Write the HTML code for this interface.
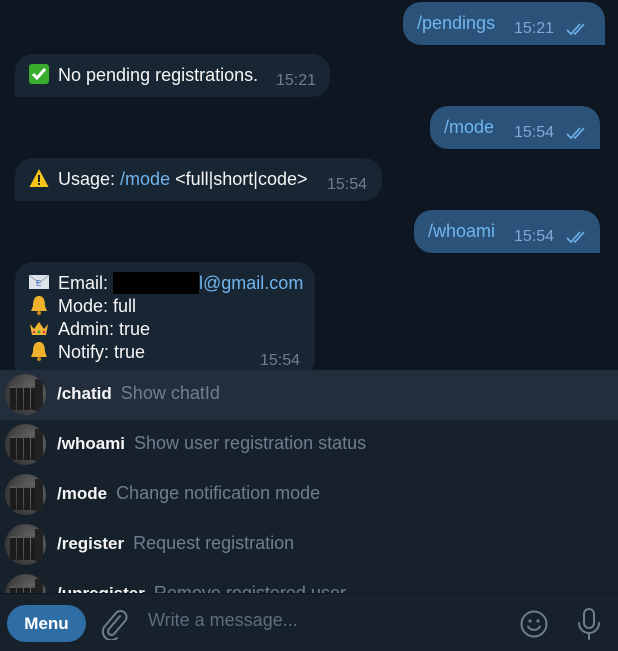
<!DOCTYPE html>
<html><head><meta charset="utf-8"><style>
*{margin:0;padding:0;box-sizing:border-box}
body{width:618px;height:651px;background:#0e1621;font-family:"Liberation Sans",sans-serif;position:relative;overflow:hidden;color:#f5f5f5}
.b{position:absolute;height:43px;font-size:18px;line-height:43px;white-space:nowrap}
.o{background:#2b5278;border-radius:18px 18px 0 18px;color:#71b5ef}
.i{background:#182533;border-radius:18px 18px 18px 0}
.t{position:absolute;font-size:16px;color:#7da8d3}
.i .t{color:#6d7f8f}
.ck{position:absolute;top:20px}
.list{position:absolute;left:0;top:370px;width:618px;height:223px;background:#17212b;overflow:hidden}
.row{position:absolute;left:0;width:618px;height:50px}
.row.h{background:#232e3c}
.av{position:absolute;left:5px;top:4px;width:41px;height:41px;border-radius:50%;background:radial-gradient(circle at 70% 40%,#6a6a6a,#3a3a3a 70%);overflow:hidden}
.av i{position:absolute;top:12px;width:6px;height:24px;background:#1c1c1c;border-top:2px solid #555}
.av b{position:absolute;left:30px;top:5px;width:8px;height:32px;background:#222}
.cmd{position:absolute;left:57px;top:13px;font-size:17px;font-weight:bold;color:#f5f5f5;white-space:nowrap}
.ds{color:#6d7f8f;font-weight:normal;margin-left:9px;font-size:18px}
.bar{position:absolute;left:0;top:593px;width:618px;height:58px;background:#17212b;border-top:1px solid #0e1621}
.em{display:inline-block;width:20px;height:20px;vertical-align:-3px;margin-right:9px}
</style></head><body>

<div class="b o" style="left:403px;top:2px;width:202px"><span style="position:absolute;left:14px;top:0px">/pendings</span><span class="t" style="left:111px;top:5px">15:21</span>
<svg class="ck" style="left:163px" width="22" height="14" viewBox="0 0 22 14"><path d="M1 8l4 4 9-10M8 11l1 1 9-10" stroke="#71b5ef" stroke-width="1.6" fill="none"/></svg></div>

<div class="b i" style="left:15px;top:54px;width:315px"><span style="position:absolute;left:14px;top:0px"><svg class="em" viewBox="0 0 20 20"><rect width="20" height="20" rx="3" fill="#3aad2f"/><path d="M4 10l4 4 8-9" stroke="#fff" stroke-width="3" fill="none"/></svg>No pending registrations.</span><span class="t" style="left:261px;top:5px">15:21</span></div>

<div class="b o" style="left:430px;top:106px;width:170px"><span style="position:absolute;left:14px;top:0px">/mode</span><span class="t" style="left:84px;top:5px">15:54</span>
<svg class="ck" style="left:136px" width="22" height="14" viewBox="0 0 22 14"><path d="M1 8l4 4 9-10M8 11l1 1 9-10" stroke="#71b5ef" stroke-width="1.6" fill="none"/></svg></div>

<div class="b i" style="left:15px;top:158px;width:367px"><span style="position:absolute;left:14px;top:0px"><svg class="em" viewBox="0 0 20 20"><path d="M10 1L19.5 19H.5z" fill="#f5c518"/><rect x="9" y="7" width="2" height="7" fill="#222"/><rect x="9" y="15" width="2" height="2" fill="#222"/></svg>Usage: <span style="color:#71b5ef">/mode</span> &lt;full|short|code&gt;</span><span class="t" style="left:312px;top:5px">15:54</span></div>

<div class="b o" style="left:414px;top:210px;width:186px"><span style="position:absolute;left:14px;top:0px">/whoami</span><span class="t" style="left:100px;top:5px">15:54</span>
<svg class="ck" style="left:152px" width="22" height="14" viewBox="0 0 22 14"><path d="M1 8l4 4 9-10M8 11l1 1 9-10" stroke="#71b5ef" stroke-width="1.6" fill="none"/></svg></div>

<div class="b i" style="left:15px;top:262px;width:300px;height:115px;line-height:23px;padding:10px 0 0 14px">
<div><svg class="em" viewBox="0 0 20 20"><rect y="3" width="20" height="14" fill="#dde3ea"/><path d="M0 3l10 8 10-8" stroke="#9aa" fill="none"/><text x="7" y="14" font-size="8" fill="#36c" font-family="Liberation Sans">E</text></svg>Email: <span style="display:inline-block;width:86px;height:22px;background:#000;vertical-align:-5px"></span><span style="color:#71b5ef">l@gmail.com</span></div>
<div><svg class="em" viewBox="0 0 20 20"><path d="M10 1c-5 0-6 5-6 10l-2 5h16l-2-5c0-5-1-10-6-10z" fill="#f0b22d"/><circle cx="10" cy="18" r="2" fill="#c88a10"/></svg>Mode: full</div>
<div><svg class="em" viewBox="0 0 20 20"><path d="M1 6l4 5 5-7 5 7 4-5-2 11H3z" fill="#f2b531"/><circle cx="10" cy="14" r="1.5" fill="#3a3"/><circle cx="5" cy="14" r="1.3" fill="#d36"/><circle cx="15" cy="14" r="1.3" fill="#d36"/></svg>Admin: true</div>
<div><svg class="em" viewBox="0 0 20 20"><path d="M10 1c-5 0-6 5-6 10l-2 5h16l-2-5c0-5-1-10-6-10z" fill="#f0b22d"/><circle cx="10" cy="18" r="2" fill="#c88a10"/></svg>Notify: true</div>
<span class="t" style="left:245px;top:87px">15:54</span></div>

<div class="list">
<div class="row h" style="top:0"><div class="av"><i style="left:5px"></i><i style="left:12px"></i><i style="left:19px"></i><i style="left:26px"></i><b></b></div><div class="cmd">/chatid<span class="ds">Show chatId</span></div></div>
<div class="row" style="top:50px"><div class="av"><i style="left:5px"></i><i style="left:12px"></i><i style="left:19px"></i><i style="left:26px"></i><b></b></div><div class="cmd">/whoami<span class="ds">Show user registration status</span></div></div>
<div class="row" style="top:100px"><div class="av"><i style="left:5px"></i><i style="left:12px"></i><i style="left:19px"></i><i style="left:26px"></i><b></b></div><div class="cmd">/mode<span class="ds">Change notification mode</span></div></div>
<div class="row" style="top:150px"><div class="av"><i style="left:5px"></i><i style="left:12px"></i><i style="left:19px"></i><i style="left:26px"></i><b></b></div><div class="cmd">/register<span class="ds">Request registration</span></div></div>
<div class="row" style="top:200px"><div class="av"><i style="left:5px"></i><i style="left:12px"></i><i style="left:19px"></i><i style="left:26px"></i><b></b></div><div class="cmd">/unregister<span class="ds">Remove registered user</span></div></div>
</div>

<div class="bar">
<div style="position:absolute;left:7px;top:11px;width:79px;height:37px;border-radius:19px;background:#2f6ea5;color:#fff;font-size:17px;font-weight:bold;line-height:37px;text-align:center">Menu</div>
<svg style="position:absolute;left:100px;top:14px" width="28" height="32" viewBox="0 0 28 32"><path d="M20 8L9 21a3.5 3.5 0 0 0 5 5l11-13a6 6 0 0 0-9-8L5 18a8.5 8.5 0 0 0 12 12" stroke="#6d7f8f" stroke-width="2" fill="none" stroke-linecap="round"/></svg>
<div style="position:absolute;left:148px;top:16px;font-size:18px;color:#5d6e7e">Write a message...</div>
<svg style="position:absolute;left:519px;top:15px" width="30" height="30" viewBox="0 0 30 30"><circle cx="15" cy="15" r="12.5" stroke="#6d7f8f" stroke-width="2" fill="none"/><circle cx="11" cy="12" r="1.6" fill="#6d7f8f"/><circle cx="19" cy="12" r="1.6" fill="#6d7f8f"/><path d="M9 17.5a7 7 0 0 0 12 0" stroke="#6d7f8f" stroke-width="2" fill="none" stroke-linecap="round"/></svg>
<svg style="position:absolute;left:576px;top:13px" width="26" height="34" viewBox="0 0 26 34"><rect x="8" y="2" width="10" height="19" rx="5" stroke="#6d7f8f" stroke-width="2" fill="none"/><path d="M3 16a10 10 0 0 0 20 0M13 26v6" stroke="#6d7f8f" stroke-width="2" fill="none" stroke-linecap="round"/></svg>
</div>
</body></html>
